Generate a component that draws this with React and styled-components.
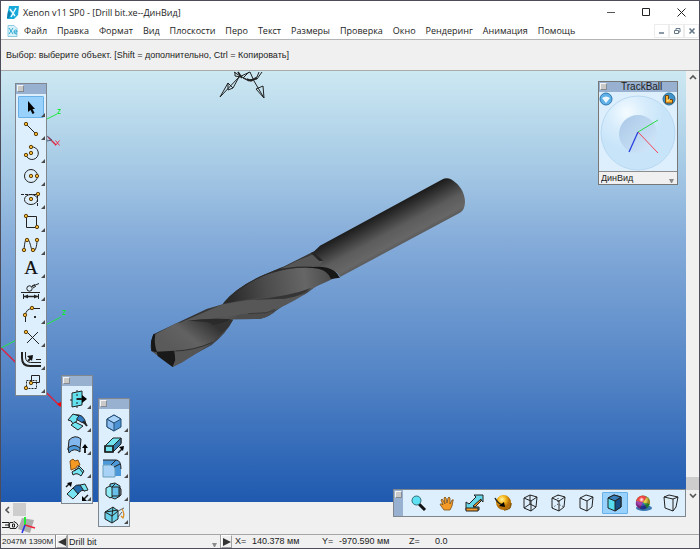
import React from 'react';
import styled, { createGlobalStyle, css } from 'styled-components';

const GlobalStyle = createGlobalStyle`
  * {
    box-sizing: border-box;
  }
  body {
    margin: 0;
    background: #44444f;
    font-family: 'Liberation Sans', Arial, sans-serif;
    font-size: 9px;
    color: #1c1c1c;
  }
  button,
  select {
    font: inherit;
    color: inherit;
    margin: 0;
    padding: 0;
    border: 0;
    border-radius: 0;
    background: none;
  }
`;

const Window = styled.div`
  position: relative;
  display: flex;
  flex-direction: column;
  min-height: 100vh;
  border: 1px solid #4c4c5b;
  background: #f0f0f0;
`;

const TitleBar = styled.header`
  display: flex;
  align-items: center;
  gap: 4px;
  height: 22px;
  padding-left: 6px;
  background: #fff;
  font-family: 'Open Sans', sans-serif;
`;

const Title = styled.h1`
  flex: 1;
  margin: 0;
  font-size: 9px;
  font-weight: 400;
`;

const WindowControls = styled.div`
  display: flex;
`;

const WindowButton = styled.button`
  display: grid;
  place-items: center;
  width: 35px;
  height: 22px;
`;

const MenuBar = styled.nav`
  display: flex;
  align-items: center;
  height: 17px;
  padding-left: 6px;
  background: #fff;
  border-bottom: 1px solid #b4b4b4;
  font-family: 'Open Sans', sans-serif;
`;

const MenuItems = styled.div`
  display: flex;
  flex: 1;
  gap: 10px;
  padding-left: 6px;
`;

const MenuItem = styled.button`
  line-height: 16px;
`;

const ChildButton = styled.button`
  display: grid;
  place-items: center;
  width: 15px;
  height: 14px;
  border: 1px solid #ececec;
`;

const Prompt = styled.p`
  margin: 0;
  padding: 0 5px;
  line-height: 30px;
  border-bottom: 1px solid #a9a9a9;
`;

const Workspace = styled.main`
  display: flex;
  flex: 1;
`;

const Viewport = styled.div`
  position: relative;
  flex: 1;
  background: linear-gradient(#cce8f2, #a6cae5 22%, #84abd9 40%, #5485c6 70%, #1f5ab0);
`;

const Scene = styled.svg`
  position: absolute;
  inset: 0;
  width: 100%;
  height: 100%;
`;

const VerticalScroll = styled.div`
  display: flex;
  flex-direction: column;
  align-items: center;
  width: 13px;
  padding-top: 1px;
`;

const ScrollButton = styled.button`
  display: grid;
  place-items: center;
  width: 12px;
  height: 12px;
`;

const ScrollThumb = styled.div`
  width: 13px;
  height: 13px;
  background: #cdcdcd;
  margin-top: ${(p) => (p.$end ? 'auto' : '0')};
`;

const HorizontalScroll = styled.div`
  display: flex;
  align-items: center;
  height: 15px;
`;

const Dock = styled.div`
  display: flex;
  align-items: center;
  height: 17px;
`;

const StatusBar = styled.footer`
  display: flex;
  align-items: stretch;
  height: 14px;
  border-top: 1px solid #a6a6a6;
  line-height: 13px;
`;

const Memory = styled.span`
  width: 55px;
  padding-left: 1px;
  border-right: 1px solid #8a8a8a;
  font-size: 8px;
  white-space: nowrap;
`;

const StepButton = styled.button`
  display: grid;
  place-items: center;
  width: 11px;
  border: 1px solid #a0a0a0;
  border-left-color: #fff;
  border-top-color: #fff;
`;

const SelectBox = styled.div`
  position: relative;
  width: ${(p) => (p.$wide ? '154px' : 'auto')};
  border-left: 1px solid #a0a0a0;
  border-right: 1px solid #a0a0a0;

  select {
    display: block;
    width: 100%;
    height: ${(p) => (p.$wide ? '13px' : '12px')};
    padding-left: ${(p) => (p.$wide ? '1px' : '2px')};
    appearance: none;
    line-height: 12px;
  }
  svg {
    position: absolute;
    right: 2px;
    bottom: 1px;
    pointer-events: none;
  }
`;

const Coordinates = styled.dl`
  display: flex;
  margin: 0;
  padding-left: 3px;

  dt {
    width: 17px;
  }
  dd {
    width: 70px;
    margin: 0;
    white-space: nowrap;
  }
  dd:last-child {
    padding-left: 9px;
  }
`;

const Panel = styled.section`
  position: absolute;
  display: flex;
  flex-direction: column;
  border: 1px solid #80868e;
  background: #ddeffc;
`;

const Palette = styled(Panel)`
  left: ${(p) => p.$left}px;
  top: ${(p) => p.$top}px;
  width: 32px;
  padding-bottom: 1px;
`;

const Caption = styled.div`
  display: flex;
  height: 10px;
  margin-bottom: 1px;
  padding: 1px;
  background: #99b1d0;
`;

const Grip = styled.button`
  width: 7px;
  height: 7px;
  background: #c9c9c9;
  border: 1px solid #858b93;
  border-top-color: #f4f4f4;
  border-left-color: #f4f4f4;
`;

const Tool = styled.button`
  position: relative;
  display: grid;
  place-items: center;
  width: 30px;
  height: 23px;

  ${(p) =>
    p.$flyout &&
    css`
      &::after {
        content: '';
        position: absolute;
        right: 1px;
        bottom: 1px;
        border: 2px solid transparent;
        border-right-color: #4a4a4a;
        border-bottom-color: #4a4a4a;
      }
    `}
`;

const ToolFace = styled.span`
  display: flex;
  align-items: center;
  justify-content: center;
  width: 26px;
  height: 22px;
  border: 1px solid ${(p) => (p.$active ? '#67b1e8' : 'transparent')};
  border-radius: 1px;
  background: ${(p) => (p.$active ? '#99d1fd' : 'none')};

  svg {
    flex: none;
  }
`;

const ViewBar = styled(Panel)`
  right: 13px;
  bottom: 31px;
  flex-direction: row;
  height: 28px;
  align-items: center;

  ${Caption} {
    height: 26px;
    width: 9px;
    margin: 0 2px 0 0;
  }
  ${Tool} {
    width: 28px;
  }
`;

const TrackBallPanel = styled(Panel)`
  right: 21px;
  top: 80px;
  width: 80px;
  border-color: #777;

  ${Caption} {
    margin: 0;
  }
  ${SelectBox} {
    background: #f0f0f0;
    border: 0;
    border-top: 1px solid #8d8d8d;
  }
`;

const CaptionText = styled.h2`
  flex: 1;
  margin: 0;
  padding-left: 14px;
  font-size: 10px;
  font-weight: 400;
  line-height: 8px;
`;

const dot = (x, y) => (
  <circle key={`${x}-${y}`} cx={x} cy={y} r="1.7" fill="#f2b632" stroke="#5e4310" strokeWidth="1" />
);

const cubeEdges = 'M5 6 11 3 18 5 17 15 12 19 5 16ZM5 6 12 9 18 5M12 9V19';

const icons = {
  select: <path d="M9 5v11l2.5-2 2 4 2-1-2-4H16Z" fill="#000" stroke="none" />,
  line: (
    <>
      <path d="M7.5 5.5 17.5 15.5" />
      {dot(7, 5)}
      {dot(17, 15)}
    </>
  ),
  arc: (
    <>
      <path d="M12 5a6.3 6.3 0 1 1-5 8" />
      {dot(12, 5)}
      {dot(12, 11)}
      {dot(7, 13)}
    </>
  ),
  circle: (
    <>
      <circle cx="12" cy="11" r="6.5" />
      {dot(12, 11)}
      {dot(18, 11)}
    </>
  ),
  ellipse: (
    <>
      <ellipse cx="12" cy="11.5" rx="6.5" ry="5" />
      <path d="M2 6.5H18M18.5 7V18" strokeDasharray="3 1" />
      {dot(12, 11)}
      {dot(19, 6)}
    </>
  ),
  rect: (
    <>
      <path d="M7.5 5.5h10v11h-10Z" />
      {dot(7, 5)}
      {dot(18, 16)}
    </>
  ),
  spline: (
    <>
      <path d="M5 16C6 3 8 3 10 7s2 9 4 10 4-4 4-11" />
      {dot(5, 16)}
      {dot(8, 6)}
      {dot(14, 16)}
      {dot(18, 6)}
    </>
  ),
  text: (
    <text x="12" y="17" textAnchor="middle" fill="#111" stroke="#111" strokeWidth=".2" fontFamily="Liberation Serif" fontSize="19">
      A
    </text>
  ),
  dimension: (
    <>
      <circle cx="10.5" cy="8.5" r="2.7" />
      <path d="M13 6.5 20 3.5M13 6l3-1.5M14 8l3-2M2 12.5H21M4.500 14v5M19.500 14v5" />
      <path d="M5 16.5H19" strokeWidth="1.5" />
      <path d="m5 16.5 4-2v4ZM19 16.5l-4-2v4Z" fill="#222" stroke="none" />
    </>
  ),
  fillet: (
    <>
      <path d="M6.5 19V12Q7 6 13 5.500H21" />
      <path d="M15 14h2M16 13v2" strokeWidth="1.5" />
      {dot(6, 12)}
      {dot(13, 5)}
    </>
  ),
  trim: (
    <>
      <path d="M8 6 20 18M19 6 8 17" />
      {dot(7, 6)}
    </>
  ),
  offset: (
    <>
      <path d="M3 3v6q0 8 8 8h11" strokeWidth="2" />
      <path d="M6.500 3v5q0 5 5 5.500H22M17 10.500h5" />
      <path d="m9 12 4-4" strokeWidth="2" />
      <path d="m14 6-6 1 5 5Z" fill="#111" stroke="none" />
    </>
  ),
  move: (
    <>
      <path d="M12.5 3.5h8v7h-8Z" />
      <path d="M7.5 8.5h10v8h-10Z" strokeDasharray="2 1" />
      {dot(12, 11)}
      {dot(7, 16)}
    </>
  ),
  mirror: (
    <>
      <path d="m7 5 10-2v14L7 19Z" fill="#64e1ef" />
      <path d="M12 2v18M5 12h4" strokeDasharray="2 2" />
      <path d="M12 11h7" strokeWidth="2" />
      <path d="m17 7 5 4-5 4Z" fill="#000" stroke="none" />
    </>
  ),
  sweep: (
    <>
      <path d="M9 4Q19 2 21 13L16 11Q12 7 8 9Z" fill="#2f7cc5" />
      <path d="m8 3-5 6q4 0 5 4l4-3Q11 7 14 5Z" fill="#71e6f2" />
      <path d="m10 11 8 4-5 4-7-5Z" fill="#71e6f2" />
      <path d="m18 10 4 5" strokeWidth="2" />
    </>
  ),
  loft: (
    <>
      <path d="M4 6Q10 0 16 5l-1 10Q9 11 3 16Z" fill="#82b7ed" />
      <path d="M3 14Q9 9 15 14v4q-6-5-11 1Z" fill="#4e99d8" />
      <path d="M20 19v-5" strokeWidth="2" />
      <path d="m17 14 3-4 3 4Z" fill="#000" stroke="none" />
    </>
  ),
  patch: (
    <>
      <path d="m14 9 5 5-3 5q-4-4-8-1l-1-3q3-2 5-3Z" fill="#75e5f3" />
      <path d="m5 4 3-2 2 2 3-1 2 5-3 1-1 2-5 2Z" fill="#f49a22" stroke="#885214" />
      <path d="m9 14 5-3 4 5" />
    </>
  ),
  blend: (
    <>
      <path d="m2 14 6-6 6 5-6 6Z" fill="#79e4f1" />
      <path d="M8 8Q11 4 15 5l5 6q-4-2-7 3Z" fill="#236dae" />
      <path d="m15 5 5-1 3 6-4 1Z" fill="#79e4f1" />
      <path d="m1 7 4-4M23 15l-5 5" strokeWidth="1.5" />
      <path d="m7 2-5 1 4 4ZM17 16v5h5Z" fill="#000" stroke="none" />
    </>
  ),
  block: (
    <>
      <path d="m12 4 7 4v8l-7 4-7-4V8Z" fill="#4d93d4" stroke="#234c73" />
      <path d="m5 8 7 4v8l-7-4Z" fill="#8bbdf0" stroke="#234c73" />
      <path d="m5 8 7-4 7 4-7 4Z" fill="#a9d2f8" stroke="#234c73" />
    </>
  ),
  extrude: (
    <>
      <path d="m3 12 8-8h8v5l-8 9H3Z" fill="#71e3ee" />
      <path d="m11 12 8-8v6l-8 8Z" fill="#347fae" />
      <path d="M3 12h8v6H3Z" strokeWidth="1.7" />
      <path d="m16 19 5-5" strokeWidth="1.5" />
      <path d="m17 13 5-1-1 5Z" fill="#000" stroke="none" />
    </>
  ),
  round: (
    <>
      <path d="M1 3h13q5 0 5 9v7h-6V12q0-4-4-4H1Z" fill="#4b99d8" stroke="none" />
      <path d="M1 8h8q4 0 4 4v8H1Z" fill="#a8d3f6" stroke="#6b9ebc" />
      <path d="M1 3h13q5 0 5 9M9 8l5-5M12 10l6-3" />
    </>
  ),
  boolean: (
    <>
      <path d="m8 4 5-1 5 3v10l-5 3-5-2Z" fill="#67c9e9" />
      <path d="m4 8 4-2 3 2v8l-3 2-4-3Z" fill="#8eebf5" />
      <path d="M10 7h7v9h-7Z" fill="#68bfe9" />
      <path d="m10 7 3-3M17 7l2 2v6l-2 1" />
    </>
  ),
  cut: (
    <>
      <path d="m3 9 8-5 5 4v8l-6 4-7-4Z" fill="#6bd4ec" />
      <path d="m3 9 7 4 6-5M10 13v7" />
      <path d="m3 9 7-1 6-1M11 4l-1 9" />
      <path d="m16 8 6-3M16 14l4-5" strokeWidth=".7" />
      <path d="M20 6q3 5 1 9l-2-2" stroke="#db8b22" strokeWidth="1.3" />
    </>
  ),
  zoom: (
    <>
      <path d="m12 12 6 6" strokeWidth="3" stroke="#111" />
      <circle cx="9.5" cy="8.5" r="4.5" fill="#5ee0f4" stroke="#346c75" />
    </>
  ),
  pan: (
    <path
      d="M9 18 6 14q-2-3 1-2l1 1-2-5q1-2 2 0l2 4-1-6q1-2 2 0l1 5 1-5q1-2 2 0v6l2-4q2-1 1 1l-1 5-2 4Z"
      fill="#f59b25"
      stroke="#77511d"
      strokeWidth=".8"
    />
  ),
  resize: (
    <>
      <path d="m3 10 3 2 7-7-2-2h9v7l-2-2-8 7h6v3H3Z" fill="#65d7e9" />
      <path d="M3 16h12v3H3Z" fill="#f59c29" />
      <path d="m10 14 8-7v2l-6 6Z" fill="#f59c29" />
    </>
  ),
  rotate: (
    <>
      <circle cx="12.5" cy="10.5" r="7.5" fill="url(#goldBall)" stroke="none" />
      <path d="M4 6q3 6 8 7" strokeWidth="1.5" />
      <path d="m13 10 1 5-6-1Z" fill="#000" stroke="none" />
      <path d="M20 11q0 7-7 7" strokeWidth="1.5" stroke="#8a570a" />
    </>
  ),
  wire: <path d={`${cubeEdges}M5 16 11 12 17 15M11 3V12`} />,
  hiddenDash: (
    <>
      <path d={cubeEdges} />
      <path d="M5 16 11 12 17 15M11 3V12" strokeDasharray="1 2" />
    </>
  ),
  hidden: <path d={cubeEdges} />,
  shaded: (
    <>
      <path d="m5 6 6-3 7 2v10l-6 4-7-3Z" fill="#56dced" />
      <path d="m12 9 6-4v10l-6 4Z" fill="#164d85" />
      <path d="m5 6 6-3 7 2-6 4Z" fill="#397eba" />
    </>
  ),
  render: (
    <>
      <ellipse cx="13" cy="16" rx="8" ry="3" fill="#3978b5" stroke="none" />
      <circle cx="12" cy="10.5" r="7" fill="#33bb43" stroke="none" />
      <path d="M12 10.5 5 9a7 7 0 0 1 11-4Z" fill="#ef3b3b" stroke="none" />
      <path d="m12 10.5 4-5.5a7 7 0 0 1 3 7Z" fill="#f2ce34" stroke="none" />
      <path d="M12 10.5 5 9a7 7 0 0 0 4 8Z" fill="#ab31b4" stroke="none" />
      <path d="m12 10.5-3 6.5a7 7 0 0 0 7-1Z" fill="#2946d4" stroke="none" />
      <circle cx="12" cy="10.5" r="7" fill="url(#shine)" stroke="none" />
    </>
  ),
  perspective: <path d="m5 5 9 2v12l-8-3ZM5 5l5-2 9 2-5 2M19 5l-2 10-3 4" />,
};

const Icon = ({ name }) => (
  <svg width="24" height="22" viewBox="0 0 24 22" fill="none" stroke="#222" strokeWidth="1" aria-hidden="true">
    {icons[name]}
  </svg>
);

const ToolButton = ({ name, label, active, flyout }) => (
  <Tool $flyout={flyout} aria-label={label} aria-pressed={!!active}>
    <ToolFace $active={active}>
      <Icon name={name} />
    </ToolFace>
  </Tool>
);

const drawTools = [
  ['select', 'Выбор'],
  ['line', 'Линия'],
  ['arc', 'Дуга'],
  ['circle', 'Окружность'],
  ['ellipse', 'Эллипс'],
  ['rect', 'Прямоугольник'],
  ['spline', 'Сплайн'],
  ['text', 'Текст'],
  ['dimension', 'Размер'],
  ['fillet', 'Скругление'],
  ['trim', 'Обрезка'],
  ['offset', 'Смещение'],
  ['move', 'Перемещение'],
];

const surfaceTools = [
  ['mirror', 'Плоскость'],
  ['sweep', 'Протягивание'],
  ['loft', 'Оболочка'],
  ['patch', 'Заплатка'],
  ['blend', 'Сопряжение'],
];

const solidTools = [
  ['block', 'Блок'],
  ['extrude', 'Выдавливание'],
  ['round', 'Скругление ребра'],
  ['boolean', 'Объединение'],
  ['cut', 'Сечение'],
];

const viewTools = [
  ['zoom', 'Масштаб'],
  ['pan', 'Сдвиг'],
  ['resize', 'Размер вида'],
  ['rotate', 'Вращение'],
  ['wire', 'Каркас'],
  ['hiddenDash', 'Невидимые пунктиром'],
  ['hidden', 'Без невидимых'],
  ['shaded', 'Закраска'],
  ['render', 'Рендер'],
  ['perspective', 'Перспектива'],
];

const menus = [
  'Файл',
  'Правка',
  'Формат',
  'Вид',
  'Плоскости',
  'Перо',
  'Текст',
  'Размеры',
  'Проверка',
  'Окно',
  'Рендеринг',
  'Анимация',
  'Помощь',
];

const ToolPalette = ({ left, top, tools, active, label }) => (
  <Palette $left={left} $top={top} aria-label={label}>
    <Caption>
      <Grip aria-label="Закрыть панель" />
    </Caption>
    {tools.map(([name, text]) => (
      <ToolButton key={name} name={name} label={text} active={name === active} flyout />
    ))}
  </Palette>
);

const Chevron = ({ d }) => (
  <svg width="8" height="8" viewBox="0 0 8 8" fill="none" stroke="#555" strokeWidth="1.6">
    <path d={d} />
  </svg>
);

const DropMark = () => (
  <svg width="6" height="4" viewBox="0 0 6 4">
    <path d="M0 0h5L3 4H2Z" fill="#8b8b8b" />
  </svg>
);

const Drill = () => (
  <g transform="translate(140 165) scale(.33333)">
    {/* fluted body */}
    <path
      d="M530 255 430 305 370 330Q290 365 248 418L200 432 130 465 40 508Q28 535 34 558L98 606 160 570 215 540Q260 505 280 463L350 462Q380 460 400 443L445 411 500 385 530 362 570 340 600 338Z"
      fill="url(#body)"
    />
    <path d="M248 417C300 350 410 306 515 307Q565 306 582 340L560 350 530 364Q490 388 440 393 330 399 248 417Z" fill="url(#flute)" />
    <path d="M250 414Q290 365 370 330L430 305Q425 314 420 314 320 345 255 411Z" fill="#2d2d2d" />
    <path d="M420 313Q470 286 520 268L555 288 530 307Q470 304 420 313Z" fill="#565656" />
    <path d="M400 320Q450 304 515 307" fill="none" stroke="#2b2b2b" strokeWidth="4" />
    <path d="M248 418Q330 401 460 396L500 385Q430 428 380 445L315 447 200 463 120 473Z" fill="#575757" />
    <path d="M290 406Q430 401 515 368 480 394 435 401Z" fill="#353535" />
    <path d="M300 448 405 440Q375 463 345 462L280 463Z" fill="#4c4c4c" />
    <path d="m325 446 55-3 25-10" fill="none" stroke="#303030" strokeWidth="2" />
    {/* front flute and point */}
    <path d="M43 509 110 474Q190 461 270 463L279 465 265 487 220 529 160 557 104 558 50 561Q38 535 43 509Z" fill="url(#front)" />
    <path d="M140 467Q200 459 270 462 258 474 215 480 228 470 140 467Z" fill="#2a2a2a" />
    <path d="M40 508 33 530 34 558 51 562Q41 535 46 508Z" fill="#171717" />
    <path d="m50 560 53-3 3 28-8 21-45-33Z" fill="#191919" />
    <path d="M104 557Q165 555 225 528L180 558 125 593 98 606 106 585Z" fill="#555" />
    <path d="M106 558Q160 557 218 532" fill="none" stroke="#303030" strokeWidth="3" />
    {/* shank */}
    <path d="M518 263 540 242 905 44Q920 36 933 43 974 68 975 112 974 136 960 143L600 336Q590 311 535 306L550 288Z" fill="url(#shank)" />
    <path d="M512 264 520 261 550 287 538 288Z" fill="#262626" />
    <path d="M500 307Q560 300 583 318 594 326 599 338L573 342Q565 318 535 311Z" fill="#171717" />
  </g>
);

const Model = () => (
  <Scene viewBox="0 0 685 431" role="img" aria-label="Drill bit">
    <defs>
      <linearGradient id="shank" gradientUnits="userSpaceOnUse" x1="720" y1="144" x2="776" y2="248">
        <stop stopColor="#1b1b1b" />
        <stop offset=".18" stopColor="#2f2f2f" />
        <stop offset=".55" stopColor="#5c5c5c" />
        <stop offset=".85" stopColor="#676767" />
        <stop offset="1" stopColor="#555" />
      </linearGradient>
      <linearGradient id="body" gradientUnits="userSpaceOnUse" x1="250" y1="390" x2="300" y2="480">
        <stop stopColor="#2c2c2c" />
        <stop offset=".6" stopColor="#565656" />
        <stop offset="1" stopColor="#424242" />
      </linearGradient>
      <linearGradient id="flute" gradientUnits="userSpaceOnUse" x1="270" y1="380" x2="570" y2="340">
        <stop stopColor="#2b2b2b" />
        <stop offset=".35" stopColor="#4b4b4b" />
        <stop offset=".75" stopColor="#666" />
        <stop offset="1" stopColor="#4d4d4d" />
      </linearGradient>
      <linearGradient id="front" gradientUnits="userSpaceOnUse" x1="110" y1="560" x2="190" y2="455">
        <stop stopColor="#5a5a5a" />
        <stop offset=".45" stopColor="#626262" />
        <stop offset="1" stopColor="#333" />
      </linearGradient>
    </defs>
    <g transform="translate(-1 -71)" fill="none">
      <g stroke="#222">
        <path d="M239 77 220 97l8-14 5 5ZM228 83v7l5-2M254 81l10 17-1-12-7 3 8 9M250 72l4 9M250 72l-11 5" />
        <path d="m234 72 6 4 8 4 9-1 5-7M235 72v4l6 1-3-5M259 72l-2 5-8 4-6-3 6-6" />
        <path d="m238 72 4 6M247 79l4 2 6-3" strokeWidth="1.5" />
      </g>
      <path d="m47 119 10-5M1 348l60-31" stroke="#20e842" />
      <path d="m48 137 8 8M1 348l59 58" stroke="#e0203c" strokeWidth="1.3" />
      <path d="m47 136 5 4-5 1M47 141l-1-5" stroke="#52617a" />
      <path d="m57 404 4-2v5Z" fill="#f00" />
      <path d="M57.5 109.5h3l-3 4h3M62.5 310.5h3l-3 4h3" stroke="#10ec32" />
      <path d="m55.5 140.5 4 5M59.5 140.5l-4 5" stroke="#f22d42" />
      <Drill />
    </g>
  </Scene>
);

const TrackBall = () => (
  <TrackBallPanel aria-label="TrackBall">
    <Caption>
      <Grip aria-label="Закрыть TrackBall" />
      <CaptionText>TrackBall</CaptionText>
    </Caption>
    <svg width="78" height="79" viewBox="0 0 78 79">
      <defs>
        <radialGradient id="ring" cx=".35" cy=".22">
          <stop stopColor="#f4fbff" />
          <stop offset=".5" stopColor="#d8edfc" />
          <stop offset="1" stopColor="#c8e4f9" />
        </radialGradient>
        <linearGradient id="hub" x2="1" y2="1">
          <stop stopColor="#a9c7e6" />
          <stop offset="1" stopColor="#d4e9fb" />
        </linearGradient>
        <radialGradient id="goldBall" cx=".4" cy=".3">
          <stop stopColor="#fff5b0" />
          <stop offset=".5" stopColor="#f8b91c" />
          <stop offset="1" stopColor="#b87006" />
        </radialGradient>
        <radialGradient id="shine" cx=".4" cy=".3">
          <stop stopColor="#fff" />
          <stop offset=".4" stopColor="#fff" stopOpacity="0" />
          <stop offset="1" stopColor="#111" stopOpacity=".4" />
        </radialGradient>
      </defs>
      <circle cx="39" cy="41" r="37" fill="url(#ring)" stroke="#b9d9f2" />
      <circle cx="39" cy="42" r="19" fill="url(#hub)" />
      <path d="m39 40 20-12" stroke="#27db45" />
      <path d="m39 40 20 21" stroke="#f04459" />
      <path d="m39 40-9 20" stroke="#2942df" strokeWidth="1.3" />
      <circle cx="7" cy="7" r="6" fill="#5fb0e6" stroke="#2d78b2" />
      <path d="M3 6q4-3 8 0l-4 5Z" fill="#eaf7ff" />
      <circle cx="70" cy="7" r="6" fill="#3f91c7" stroke="#2a6e9b" />
      <path d="M66.5 11V3.5h3v4h4V11Z" fill="#ffb332" stroke="#704713" />
      <path d="m68 9 3-2" stroke="#fff3ad" />
    </svg>
    <SelectBox>
      <select aria-label="Вид" defaultValue="ДинВид">
        <option>ДинВид</option>
      </select>
      <DropMark />
    </SelectBox>
  </TrackBallPanel>
);

const App = () => (
  <>
    <GlobalStyle />
    <Window>
      <TitleBar>
        <svg width="12" height="13" viewBox="0 0 12 13">
          <path d="M2 0h10l-1 9-4 4H0l1-8Z" fill="#17a8dc" />
          <path d="m1 5 3 2-2 5H0Z" fill="#087fae" />
          <path d="m3 3 5 7M9 2l-5 9" stroke="#e7faff" strokeWidth="1.5" />
        </svg>
        <Title>Xenon v11 SP0 - [Drill bit.xe--ДинВид]</Title>
        <WindowControls>
          <WindowButton aria-label="Свернуть">
            <svg width="9" height="9" stroke="#555">
              <path d="M0 4.5h8" />
            </svg>
          </WindowButton>
          <WindowButton aria-label="Развернуть">
            <svg width="9" height="9" fill="none" stroke="#222">
              <path d="M.5.5h7v7h-7Z" />
            </svg>
          </WindowButton>
          <WindowButton aria-label="Закрыть">
            <svg width="9" height="9" stroke="#222">
              <path d="m.5.5 8 8M8.5.5l-8 8" />
            </svg>
          </WindowButton>
        </WindowControls>
      </TitleBar>

      <MenuBar>
        <svg width="11" height="12" viewBox="0 0 11 12" fill="none" stroke="#29a7d1">
          <path d="M1 .5h6l3 3v8H1Z" fill="#d9f1fa" stroke="#8acbe2" />
          <path d="m2 3 4 6M6 3 2 9M7 7h3q0-2-1.5-2T7 7t3 2" />
        </svg>
        <MenuItems>
          {menus.map((name) => (
            <MenuItem key={name}>{name}</MenuItem>
          ))}
        </MenuItems>
        <ChildButton aria-label="Свернуть документ">
          <svg width="8" height="8" stroke="#667788" strokeWidth="1.5">
            <path d="M1 6h5" />
          </svg>
        </ChildButton>
        <ChildButton aria-label="Восстановить документ">
          <svg width="8" height="8" fill="none" stroke="#667788">
            <path d="M1.5 3.5h4v3h-4ZM3 3V1.500h4V5H6" />
          </svg>
        </ChildButton>
        <ChildButton aria-label="Закрыть документ">
          <svg width="8" height="8" stroke="#667788" strokeWidth="1.6">
            <path d="m1.5 1.5 5 5M6.5 1.5l-5 5" />
          </svg>
        </ChildButton>
      </MenuBar>

      <Prompt>Выбор: выберите объект. [Shift = дополнительно, Ctrl = Копировать]</Prompt>

      <Workspace>
        <Viewport>
          <Model />
        </Viewport>
        <VerticalScroll>
          <ScrollButton aria-label="Вверх">
            <Chevron d="m1 5 3-3 3 3" />
          </ScrollButton>
          <ScrollThumb $end />
          <ScrollButton aria-label="Вниз">
            <Chevron d="m1 2 3 3 3-3" />
          </ScrollButton>
        </VerticalScroll>
      </Workspace>

      <HorizontalScroll>
        <ScrollButton aria-label="Влево">
          <Chevron d="m6 1-3 3 3 3" />
        </ScrollButton>
        <ScrollThumb />
      </HorizontalScroll>
      <Dock>
        <svg width="35" height="17" viewBox="0 0 35 17" fill="none">
          <path d="M1 5.5h7v5H1M4 8h5M9 5.5h3l1-1 3 2 1 2-2 3H9L8 8ZM11.5 7h2v3h-2Z" stroke="#222" />
          <path d="m21 1 12 2-4 13-12-4Z" fill="#adadad" />
          <path d="M24 0v8" stroke="#21ec35" strokeWidth="2" />
          <path d="m24 8 10 3" stroke="#ee2538" strokeWidth="1.5" />
          <path d="m24 8-3 8" stroke="#242fe8" strokeWidth="1.5" />
        </svg>
      </Dock>

      <StatusBar>
        <Memory>2047M 1390M</Memory>
        <StepButton aria-label="Предыдущий">
          <svg width="8" height="8">
            <path d="M8 0v8L0 4Z" fill="#333" />
          </svg>
        </StepButton>
        <SelectBox $wide>
          <select aria-label="Документ" defaultValue="Drill bit">
            <option>Drill bit</option>
          </select>
          <DropMark />
        </SelectBox>
        <StepButton aria-label="Следующий">
          <svg width="8" height="8">
            <path d="M0 0v8l8-4Z" fill="#333" />
          </svg>
        </StepButton>
        <Coordinates>
          <dt>X=</dt>
          <dd>140.378 мм</dd>
          <dt>Y=</dt>
          <dd>-970.590 мм</dd>
          <dt>Z=</dt>
          <dd>0.0</dd>
        </Coordinates>
      </StatusBar>

      <ToolPalette left={14} top={82} tools={drawTools} active="select" label="Черчение" />
      <ToolPalette left={60} top={374} tools={surfaceTools} label="Поверхности" />
      <ToolPalette left={97} top={397} tools={solidTools} label="Тела" />
      <ViewBar aria-label="Вид">
        <Caption>
          <Grip aria-label="Закрыть панель" />
        </Caption>
        {viewTools.map(([name, text]) => (
          <ToolButton key={name} name={name} label={text} active={name === 'shaded'} />
        ))}
      </ViewBar>
      <TrackBall />
    </Window>
  </>
);

export default App;
